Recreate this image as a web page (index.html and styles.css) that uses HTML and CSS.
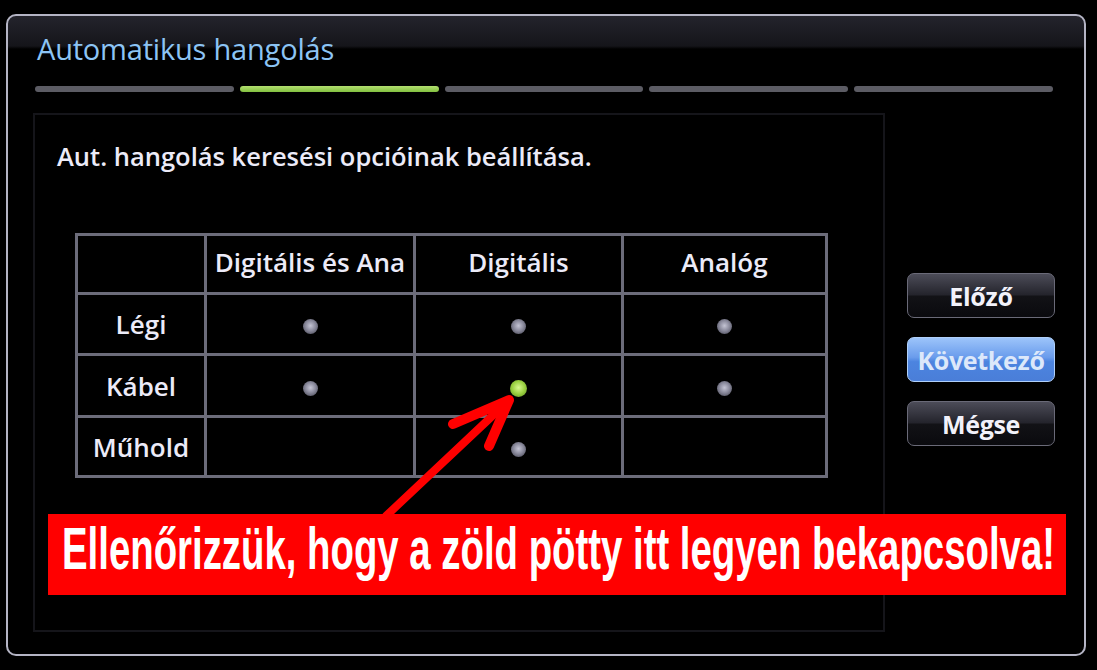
FILE: index.html
```html
<!DOCTYPE html>
<html lang="hu">
<head>
<meta charset="utf-8">
<title>Automatikus hangolás</title>
<link rel="stylesheet" href="styles.css">
</head>
<body>
<div class="page">
  <div class="frame">
    <h1 class="title">Automatikus hangolás</h1>
    <div class="steps">
      <span class="step"></span>
      <span class="step active"></span>
      <span class="step"></span>
      <span class="step"></span>
      <span class="step"></span>
    </div>
    <div class="body">
      <div class="panel">
        <p class="subtitle">Aut. hangolás keresési opcióinak beállítása.</p>
        <table class="grid">
          <colgroup>
            <col class="c0"><col class="c1"><col class="c2"><col class="c3">
          </colgroup>
          <tr class="r0">
            <th></th>
            <th>Digitális és Ana</th>
            <th>Digitális</th>
            <th>Analóg</th>
          </tr>
          <tr class="r1">
            <th>Légi</th>
            <td><span class="dot"></span></td>
            <td><span class="dot"></span></td>
            <td><span class="dot"></span></td>
          </tr>
          <tr class="r2">
            <th>Kábel</th>
            <td><span class="dot"></span></td>
            <td><span class="dot on"></span></td>
            <td><span class="dot"></span></td>
          </tr>
          <tr class="r3">
            <th>Műhold</th>
            <td></td>
            <td><span class="dot"></span></td>
            <td></td>
          </tr>
        </table>
      </div>
      <div class="buttons">
        <button class="btn">Előző</button>
        <button class="btn primary">Következő</button>
        <button class="btn">Mégse</button>
      </div>
    </div>
  </div>
  <svg class="arrow" width="1097" height="670" viewBox="0 0 1097 670">
    <line x1="386" y1="516" x2="505" y2="404" stroke="#ff0000" stroke-width="8" stroke-linecap="round"/>
    <polyline points="453,424 509,400 489,446" fill="none" stroke="#ff0000" stroke-width="10" stroke-linecap="round" stroke-linejoin="round"/>
  </svg>
  <div class="banner"><span class="banner-text">Ellenőrizzük, hogy a zöld pötty itt legyen bekapcsolva!</span></div>
</div>
</body>
</html>
```

FILE: styles.css
```css
html, body {
  margin: 0;
  padding: 0;
  background: #000;
}
.page {
  position: relative;
  width: 1097px;
  height: 670px;
  overflow: hidden;
  padding-top: 14px;
  box-sizing: border-box;
  font-family: "Open Sans", "Noto Sans", sans-serif;
}
.frame {
  margin-left: 6px;
  width: 1080px;
  height: 642px;
  box-sizing: border-box;
  border: 2px solid #b4b4c4;
  border-radius: 10px;
  background: linear-gradient(to bottom, #24242c 0px, #15151a 30px, #000 33px);
  display: flex;
  flex-direction: column;
}
.title {
  margin: 0;
  padding: 16px 0 0 29px;
  font-size: 29px;
  line-height: 34px;
  font-weight: 500;
  color: #8cc4f4;
  letter-spacing: -0.2px;
}
.steps {
  display: flex;
  gap: 6px;
  margin: 20px 31px 0 27px;
  height: 6px;
}
.step {
  flex: 1;
  height: 6px;
  border-radius: 3px;
  background: #5c5c64;
}
.step.active {
  background: linear-gradient(to bottom, #b4e070, #82c040);
}
.body {
  display: flex;
  margin-top: 21px;
  margin-left: 25px;
  gap: 22px;
}
.panel {
  width: 852px;
  height: 519px;
  box-sizing: border-box;
  border: 2px solid #15151a;
  padding: 26px 0 0 22px;
}
.subtitle {
  margin: 0;
  font-size: 25.5px;
  line-height: 30px;
  font-weight: 600;
  color: #ecebf8;
}
.grid {
  margin: 62px 0 0 18px;
  border-collapse: collapse;
  color: #ecebf8;
}
.grid th, .grid td {
  border: 3px solid #6c6c7a;
  padding: 0;
  text-align: center;
  vertical-align: middle;
  white-space: nowrap;
  overflow: hidden;
}
.grid th {
  font-size: 26px;
  font-weight: 600;
}
.c0 { width: 129px; }
.c1 { width: 209px; }
.c2 { width: 208px; }
.c3 { width: 204px; }
.r0 { height: 59px; }
.r1 { height: 61px; }
.r2 { height: 62px; }
.r3 { height: 60px; }
.grid .r0 th { padding-bottom: 4px; }
.dot {
  display: inline-block;
  width: 15px;
  height: 15px;
  border-radius: 50%;
  background: radial-gradient(circle at 50% 45%, #c4c4d4 0%, #8a8a9c 45%, #3c3c48 100%);
  vertical-align: middle;
  margin-top: 2px;
}
.dot.on {
  width: 17px;
  height: 17px;
  background: radial-gradient(circle at 50% 45%, #d8f890 0%, #9ad040 50%, #5a8a20 100%);
}
.buttons {
  display: flex;
  flex-direction: column;
  gap: 19px;
  margin-top: 160px;
}
.btn {
  width: 148px;
  height: 45px;
  border-radius: 7px;
  border: 1px solid #6a6a78;
  background: linear-gradient(to bottom, #4c4c58 0%, #24242c 48%, #121216 52%, #0a0a0e 100%);
  color: #f2f2fa;
  font-family: "Open Sans", "Noto Sans", sans-serif;
  font-size: 25px;
  font-weight: 700;
  padding: 0;
  letter-spacing: -0.3px;
}
.btn.primary {
  border-color: #b0d0fa;
  background: linear-gradient(to bottom, #9cc4fa 0%, #6a9cec 45%, #4c84e0 55%, #4a7ed8 100%);
  color: #dce8fa;
}
.arrow {
  position: absolute;
  left: 0;
  top: 0;
  pointer-events: none;
}
.banner {
  position: absolute;
  left: 48px;
  top: 514px;
  width: 1018px;
  height: 81px;
  background: #ff0000;
  overflow: hidden;
}
.banner-text {
  display: inline-block;
  margin: 2px 0 0 14px;
  font-family: "Liberation Sans", Arial, sans-serif;
  font-weight: 700;
  font-size: 59px;
  line-height: 66px;
  color: #fff;
  white-space: nowrap;
  transform: scaleX(0.65);
  transform-origin: 0 0;
}
```
